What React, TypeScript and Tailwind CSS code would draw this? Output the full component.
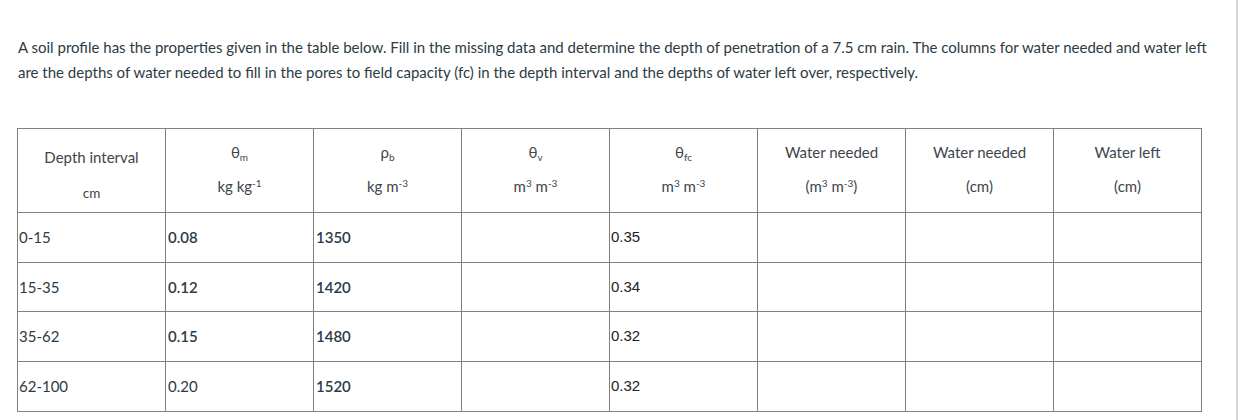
import React from 'react';

const lato = { fontFamily: 'Lato, "Noto Sans", sans-serif' };

function HeadCell({ top, bottom, first }: { top: React.ReactNode; bottom: React.ReactNode; first?: boolean }) {
  return (
    <th className="border border-[#808080] p-0 font-normal align-top">
      <div className={`flex flex-col items-center ${first ? 'pt-[18px] gap-[15px]' : 'pt-[13px] gap-[14px]'}`}>
        <div className="leading-[20px]">{top}</div>
        <div className="leading-[20px]">{bottom}</div>
      </div>
    </th>
  );
}

const rows = [
  { depth: '0-15', tm: '0.08', rho: '1350', tfc: '0.35', tmBold: true, h: 'h-[50px]' },
  { depth: '15-35', tm: '0.12', rho: '1420', tfc: '0.34', tmBold: true, h: 'h-[49px]' },
  { depth: '35-62', tm: '0.15', rho: '1480', tfc: '0.32', tmBold: true, h: 'h-[50px]' },
  { depth: '62-100', tm: '0.20', rho: '1520', tfc: '0.32', tmBold: false, h: 'h-[50px]' },
];

export default function App() {
  return (
    <div className="w-[1238px] h-[420px] bg-white border-r-2 border-[#d4d8db] text-[#2d3b45] overflow-hidden" style={lato}>
      <div className="pl-[18px] pr-[20px] pt-[35px]">
        <p className="text-[15px] leading-[25px]">
          A soil profile has the properties given in the table below. Fill in the missing data and determine the depth of penetration of a 7.5 cm rain. The columns for water needed and water left are the depths of water needed to fill in the pores to field capacity (fc) in the depth interval and the depths of water left over, respectively.
        </p>
      </div>

      <div className="pl-[17px] mt-[43px]">
        <table className="table-fixed border-collapse w-[1183px] text-[15px] text-[#3d454c]">
          <colgroup>
            {[0, 1, 2, 3, 4, 5, 6, 7].map((i) => (
              <col key={i} className="w-[148px]" />
            ))}
          </colgroup>
          <thead>
            <tr className="h-[84px]">
              <HeadCell first top="Depth interval" bottom={<span className="text-[13.5px]">cm</span>} />
              <HeadCell
                top={<span>θ<sub className="text-[10px]">m</sub></span>}
                bottom={<span>kg kg<sup className="text-[10px]">-1</sup></span>}
              />
              <HeadCell
                top={<span>ρ<sub className="text-[10px]">b</sub></span>}
                bottom={<span>kg m<sup className="text-[10px]">-3</sup></span>}
              />
              <HeadCell
                top={<span>θ<sub className="text-[10px]">v</sub></span>}
                bottom={<span>m<sup className="text-[10px]">3</sup> m<sup className="text-[10px]">-3</sup></span>}
              />
              <HeadCell
                top={<span>θ<sub className="text-[10px]">fc</sub></span>}
                bottom={<span>m<sup className="text-[10px]">3</sup> m<sup className="text-[10px]">-3</sup></span>}
              />
              <HeadCell
                top="Water needed"
                bottom={<span>(m<sup className="text-[10px]">3</sup> m<sup className="text-[10px]">-3</sup>)</span>}
              />
              <HeadCell top="Water needed" bottom="(cm)" />
              <HeadCell top="Water left" bottom="(cm)" />
            </tr>
          </thead>
          <tbody className="text-[15px] text-[#2d3b45]">
            {rows.map((r) => (
              <tr key={r.depth} className={r.h}>
                <td className="border border-[#808080] pl-[1px]">{r.depth}</td>
                <td className={`border border-[#808080] pl-[2px] ${r.tmBold ? 'font-semibold' : ''}`}>{r.tm}</td>
                <td className="border border-[#808080] pl-[2px] font-semibold">{r.rho}</td>
                <td className="border border-[#808080]"></td>
                <td
                  className="border border-[#808080] pl-[1px] text-[#222]"
                  style={{ fontFamily: '"Liberation Sans", Arial, sans-serif' }}
                >
                  {r.tfc}
                </td>
                <td className="border border-[#808080]"></td>
                <td className="border border-[#808080]"></td>
                <td className="border border-[#808080]"></td>
              </tr>
            ))}
          </tbody>
        </table>
      </div>
    </div>
  );
}
